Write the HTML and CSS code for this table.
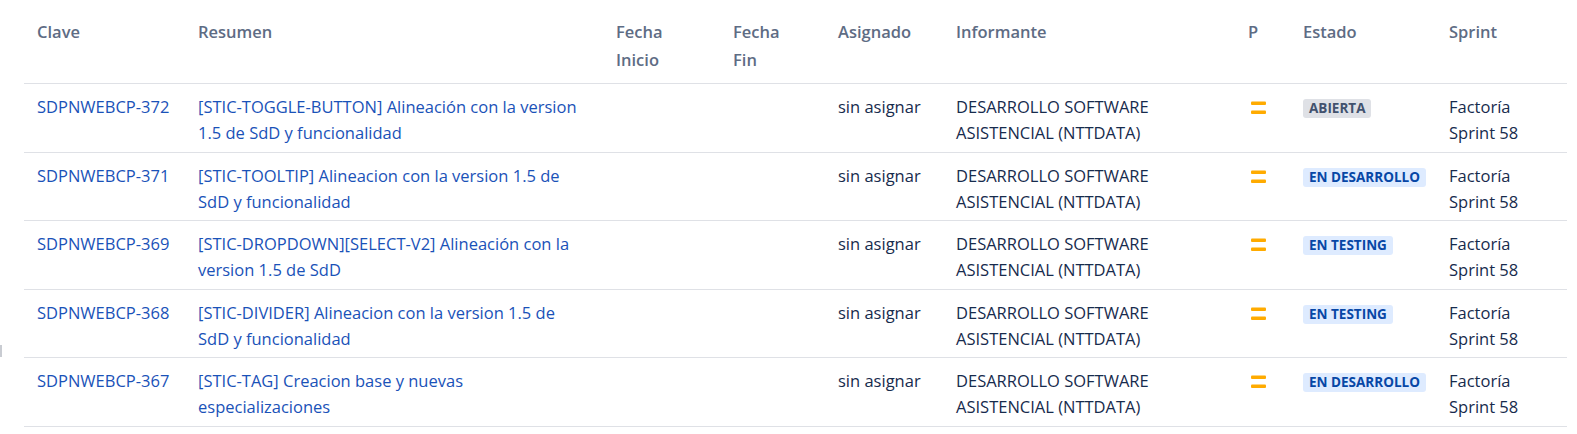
FILE: index.html
```html
<!DOCTYPE html>
<html lang="es">
<head>
<meta charset="utf-8">
<title>Incidencias</title>
<link rel="stylesheet" href="styles.css">
</head>
<body>
<span class="edge-mark"></span>
<table class="issues">
  <colgroup>
    <col class="w-key"><col class="w-sum"><col class="w-start"><col class="w-end"><col class="w-asg"><col class="w-rep"><col class="w-pri"><col class="w-st"><col class="w-spr">
  </colgroup>
  <thead>
    <tr>
      <th class="c-key">Clave</th>
      <th>Resumen</th>
      <th><span class="stack">Fecha Inicio</span></th>
      <th><span class="stack">Fecha Fin</span></th>
      <th>Asignado</th>
      <th>Informante</th>
      <th>P</th>
      <th>Estado</th>
      <th>Sprint</th>
    </tr>
  </thead>
  <tbody>
    <tr>
      <td class="c-key"><a href="#">SDPNWEBCP-372</a></td>
      <td class="c-sum"><a href="#">[STIC-TOGGLE-BUTTON] Alineación con la version 1.5 de SdD y funcionalidad</a></td>
      <td></td><td></td>
      <td>sin asignar</td>
      <td>DESARROLLO SOFTWARE ASISTENCIAL (NTTDATA)</td>
      <td><svg class="pri" viewBox="0 0 18 16" width="18" height="16"><rect x="1" y="2.5" width="15" height="3.5" rx="1"/><rect x="1" y="11.5" width="15" height="3.5" rx="1"/></svg></td>
      <td><span class="lozenge gray">Abierta</span></td>
      <td>Factoría Sprint 58</td>
    </tr>
    <tr>
      <td class="c-key"><a href="#">SDPNWEBCP-371</a></td>
      <td class="c-sum"><a href="#">[STIC-TOOLTIP] Alineacion con la version 1.5 de SdD y funcionalidad</a></td>
      <td></td><td></td>
      <td>sin asignar</td>
      <td>DESARROLLO SOFTWARE ASISTENCIAL (NTTDATA)</td>
      <td><svg class="pri" viewBox="0 0 18 16" width="18" height="16"><rect x="1" y="2.5" width="15" height="3.5" rx="1"/><rect x="1" y="11.5" width="15" height="3.5" rx="1"/></svg></td>
      <td><span class="lozenge blue">En desarrollo</span></td>
      <td>Factoría Sprint 58</td>
    </tr>
    <tr>
      <td class="c-key"><a href="#">SDPNWEBCP-369</a></td>
      <td class="c-sum"><a href="#">[STIC-DROPDOWN][SELECT-V2] Alineación con la version 1.5 de SdD</a></td>
      <td></td><td></td>
      <td>sin asignar</td>
      <td>DESARROLLO SOFTWARE ASISTENCIAL (NTTDATA)</td>
      <td><svg class="pri" viewBox="0 0 18 16" width="18" height="16"><rect x="1" y="2.5" width="15" height="3.5" rx="1"/><rect x="1" y="11.5" width="15" height="3.5" rx="1"/></svg></td>
      <td><span class="lozenge blue">En testing</span></td>
      <td>Factoría Sprint 58</td>
    </tr>
    <tr>
      <td class="c-key"><a href="#">SDPNWEBCP-368</a></td>
      <td class="c-sum"><a href="#">[STIC-DIVIDER] Alineacion con la version 1.5 de SdD y funcionalidad</a></td>
      <td></td><td></td>
      <td>sin asignar</td>
      <td>DESARROLLO SOFTWARE ASISTENCIAL (NTTDATA)</td>
      <td><svg class="pri" viewBox="0 0 18 16" width="18" height="16"><rect x="1" y="2.5" width="15" height="3.5" rx="1"/><rect x="1" y="11.5" width="15" height="3.5" rx="1"/></svg></td>
      <td><span class="lozenge blue">En testing</span></td>
      <td>Factoría Sprint 58</td>
    </tr>
    <tr>
      <td class="c-key"><a href="#">SDPNWEBCP-367</a></td>
      <td class="c-sum"><a href="#">[STIC-TAG] Creacion base y nuevas especializaciones</a></td>
      <td></td><td></td>
      <td>sin asignar</td>
      <td>DESARROLLO SOFTWARE ASISTENCIAL (NTTDATA)</td>
      <td><svg class="pri" viewBox="0 0 18 16" width="18" height="16"><rect x="1" y="2.5" width="15" height="3.5" rx="1"/><rect x="1" y="11.5" width="15" height="3.5" rx="1"/></svg></td>
      <td><span class="lozenge blue">En desarrollo</span></td>
      <td>Factoría Sprint 58</td>
    </tr>
  </tbody>
</table>
</body>
</html>
```
FILE: styles.css
```css
html, body {
  margin: 0;
  padding: 0;
  background: #ffffff;
}

body {
  font-family: "Open Sans", "Noto Sans", sans-serif;
  font-size: 16.5px;
  color: #172b4d;
  position: relative;
}

.edge-mark {
  position: absolute;
  left: 0;
  top: 345px;
  width: 2px;
  height: 12px;
  background: #c9ccd2;
}

.issues {
  margin-left: 24px;
  width: 1543px;
  table-layout: fixed;
  border-collapse: collapse;
  border-spacing: 0;
}

.w-key { width: 174px; }
.w-sum { width: 418px; }
.w-start { width: 117px; }
.w-end { width: 105px; }
.w-asg { width: 118px; }
.w-rep { width: 292px; }
.w-pri { width: 55px; }
.w-st { width: 146px; }
.w-spr { width: 118px; }

.issues th {
  text-align: left;
  vertical-align: top;
  font-weight: 600;
  color: #5e6c84;
  line-height: 28px;
  padding: 18px 10px 9px 0;
  border-bottom: 1px solid #dfe1e6;
}

.issues td {
  vertical-align: top;
  line-height: 26px;
  padding: 10px 10px 5.5px 0;
  border-bottom: 1px solid #dfe1e6;
}

.issues .c-key {
  padding-left: 13px;
}

.issues .c-sum {
  padding-right: 30px;
}

.stack {
  display: inline-block;
  width: min-content;
}

.issues a {
  color: #1a52b8;
  text-decoration: none;
}

.pri {
  display: block;
  margin: 5px 0 0 2px;
  fill: #ffab00;
}

.lozenge {
  display: inline-block;
  vertical-align: top;
  margin-top: 5px;
  height: 19px;
  line-height: 19px;
  padding: 0 6px;
  border-radius: 3px;
  font-size: 13.5px;
  font-weight: 700;
  text-transform: uppercase;
}

.lozenge.gray {
  background: #dfe1e6;
  color: #42526e;
}

.lozenge.blue {
  background: #deebff;
  color: #0747a6;
}
```
